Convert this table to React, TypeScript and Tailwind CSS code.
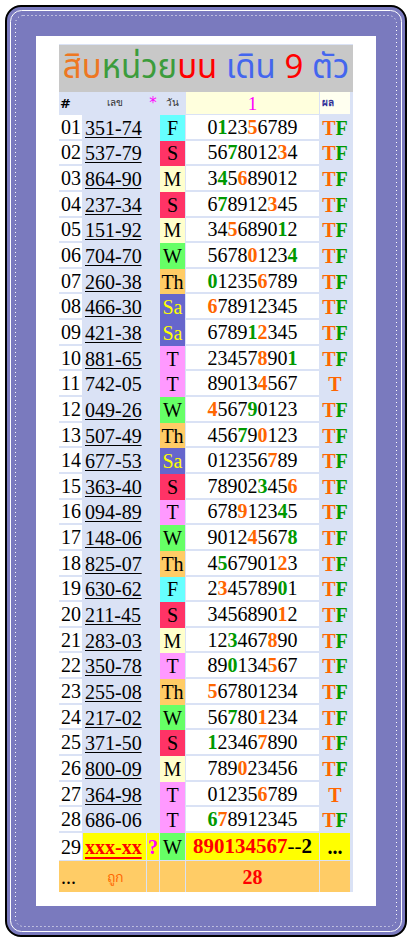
const DAY: Record<string, string> = {
  F: "bg-[#66ffff] text-black",
  S: "bg-[#ff3366] text-black",
  M: "bg-[#ffffcc] text-black",
  W: "bg-[#66ff66] text-black",
  Th: "bg-[#ffcc66] text-black",
  Sa: "bg-[#6666cc] text-[#ffff00]",
  T: "bg-[#ff99ff] text-black",
};

// * = green digit, ^ = orange digit
const rows: [string, string, boolean, string, string, string][] = [
  ["01", "351-74", true, "F", "0*123^56789", "TF"],
  ["02", "537-79", true, "S", "56*78012^34", "TF"],
  ["03", "864-90", true, "M", "3*45^689012", "TF"],
  ["04", "237-34", true, "S", "6*78912^345", "TF"],
  ["05", "151-92", true, "M", "34^56890*12", "TF"],
  ["06", "704-70", true, "W", "5678^0123*4", "TF"],
  ["07", "260-38", true, "Th", "*01235^6789", "TF"],
  ["08", "466-30", true, "Sa", "^678912345", "TF"],
  ["09", "421-38", true, "Sa", "6789*1^2345", "TF"],
  ["10", "881-65", true, "T", "23457^890*1", "TF"],
  ["11", "742-05", false, "T", "89013^4567", "T"],
  ["12", "049-26", true, "W", "^4567*90123", "TF"],
  ["13", "507-49", true, "Th", "456*79^0123", "TF"],
  ["14", "677-53", true, "Sa", "012356^789", "TF"],
  ["15", "363-40", true, "S", "78902*345^6", "TF"],
  ["16", "094-89", true, "T", "678^9123*45", "TF"],
  ["17", "148-06", true, "W", "9012^4567*8", "TF"],
  ["18", "825-07", true, "Th", "4*567901^23", "TF"],
  ["19", "630-62", true, "F", "2^345789*01", "TF"],
  ["20", "211-45", true, "S", "3456890^12", "TF"],
  ["21", "283-03", true, "M", "12*3467^890", "TF"],
  ["22", "350-78", true, "T", "89*0134^567", "TF"],
  ["23", "255-08", true, "Th", "^567801234", "TF"],
  ["24", "217-02", true, "W", "56*780^1234", "TF"],
  ["25", "371-50", true, "S", "*12346^7890", "TF"],
  ["26", "800-09", true, "M", "789^023456", "TF"],
  ["27", "364-98", true, "T", "01235^6789", "T"],
  ["28", "686-06", false, "T", "*6^78912345", "TF"],
];

const cols = "grid grid-cols-[23px_63px_12px_25px_133px_30px] gap-x-px";

function Digits({ s }: { s: string }) {
  const out: React.ReactNode[] = [];
  let mode = "";
  s.split("").forEach((ch, i) => {
    if (ch === "*" || ch === "^") {
      mode = ch;
      return;
    }
    if (mode === "*") out.push(<b key={i} className="text-[#009900]">{ch}</b>);
    else if (mode === "^") out.push(<b key={i} className="text-[#ff6600]">{ch}</b>);
    else out.push(<span key={i}>{ch}</span>);
    mode = "";
  });
  return <>{out}</>;
}

function Result({ r }: { r: string }) {
  return (
    <div className="flex items-center justify-center font-bold">
      <span className="text-[#ff6600]">T</span>
      {r === "TF" && <span className="text-[#009900]">F</span>}
    </div>
  );
}

export default function App() {
  return (
    <div className="bg-white p-[5px] font-['Liberation_Serif','Times_New_Roman',serif] text-[20px] leading-none text-black">
      <div className="relative w-[402px] h-[932px] rounded-[16px] border-2 border-black bg-[#7a7abe] p-[29px]">
        <svg className="absolute inset-0 w-full h-full pointer-events-none" viewBox="0 0 398 928">
          <rect x="3.5" y="3.5" width="391" height="921" rx="11" fill="none" stroke="#fff" strokeWidth="1" />
          <rect x="8.5" y="8.5" width="381" height="911" rx="8" fill="none" stroke="#fff" strokeWidth="1" strokeDasharray="1 3" />
        </svg>

        <div className="w-[340px] h-[870px] bg-white pt-[8px] px-[23px]">
          <div className="bg-[#dae2f5] pt-px pr-[3px] w-[294px]">
            {/* title */}
            <div className="-mr-[3px] h-[47px] bg-[#c8c8c8] flex items-center justify-center font-['Tahoma','Noto_Sans_Thai','DejaVu_Sans',sans-serif] text-[33px] whitespace-nowrap">
              <span className="text-[#ee7722]">สิบ</span>
              <span className="text-[#3c9c3c]">หน่วย</span>
              <span className="text-[#ff0000]">บน</span>
              <span className="text-[#4466ee]">&nbsp;เดิน&nbsp;</span>
              <span className="text-[#ff0000]">9</span>
              <span className="text-[#4466ee]">&nbsp;ตัว</span>
            </div>

            {/* header */}
            <div className={`${cols} h-[22px] mb-px font-['Tahoma','DejaVu_Sans',sans-serif] text-[10px]`}>
              <div className="flex items-center pl-px text-[13px] font-bold">#</div>
              <div className="flex items-center justify-center text-[#333]">เลข</div>
              <div className="flex items-center justify-center text-[#ff00ff] text-[15px]">*</div>
              <div className="flex items-center justify-center text-[#333]">วัน</div>
              <div className="flex items-center justify-center bg-[#ffffdd] text-[#ff00ff] font-['Liberation_Serif',serif] text-[19px]">1</div>
              <div className="flex items-center pl-[2px] bg-[#fffff0] text-[#333399] font-bold">ผล</div>
            </div>

            {/* body */}
            <div className={`${cols} grid-rows-[repeat(28,minmax(0,1fr))] h-[718px]`}>
              {rows.map(([n, num, u, d, digits, r]) => (
                <div key={n} className="contents">
                  <div className="bg-white border-b-2 border-[#dae2f5] flex items-center pl-[2px]">{n}</div>
                  <div className="col-span-2 flex items-center pl-[2px]">
                    <span className={u ? "underline underline-offset-[2px] decoration-1" : ""}>{num}</span>
                  </div>
                  <div className={`${DAY[d]} flex items-center justify-center`}>{d}</div>
                  <div className="bg-white border-b-2 border-[#dae2f5] flex items-center justify-center">
                    <Digits s={digits} />
                  </div>
                  <Result r={r} />
                </div>
              ))}
            </div>

            {/* today row */}
            <div className={`${cols} h-[27px] mb-px`}>
              <div className="bg-white flex items-center pl-[2px]">29</div>
              <div className="bg-[#ffff00] flex items-center pl-[2px] font-bold text-[#ff0000]">
                <span className="underline decoration-2 underline-offset-[3px]">xxx-xx</span>
              </div>
              <div className="bg-[#ffff00] flex items-center justify-center font-bold text-[#ff00ff]">?</div>
              <div className={`${DAY.W} flex items-center justify-center`}>W</div>
              <div className="bg-[#ffff00] flex items-center justify-center text-[21px]">
                <b className="text-[#ff0000]">890134567</b>
                <span>--</span>
                <b>2</b>
              </div>
              <div className="bg-[#ffff00] flex items-center justify-center font-bold">...</div>
            </div>

            {/* footer */}
            <div className={`${cols} h-[31px]`}>
              <div className="col-span-2 bg-[#ffcc66] flex items-center">
                <span className="w-[24px] pl-[2px]">...</span>
                <span className="flex-1 text-center font-['Tahoma','DejaVu_Sans',sans-serif] text-[14px] text-[#ff6600]">ถูก</span>
              </div>
              <div className="bg-[#ffcc66]" />
              <div className="bg-[#ffcc66]" />
              <div className="bg-[#ffcc66] flex items-center justify-center font-bold text-[#ff0000]">28</div>
              <div className="bg-[#ffcc66]" />
            </div>
          </div>
        </div>
      </div>
    </div>
  );
}
